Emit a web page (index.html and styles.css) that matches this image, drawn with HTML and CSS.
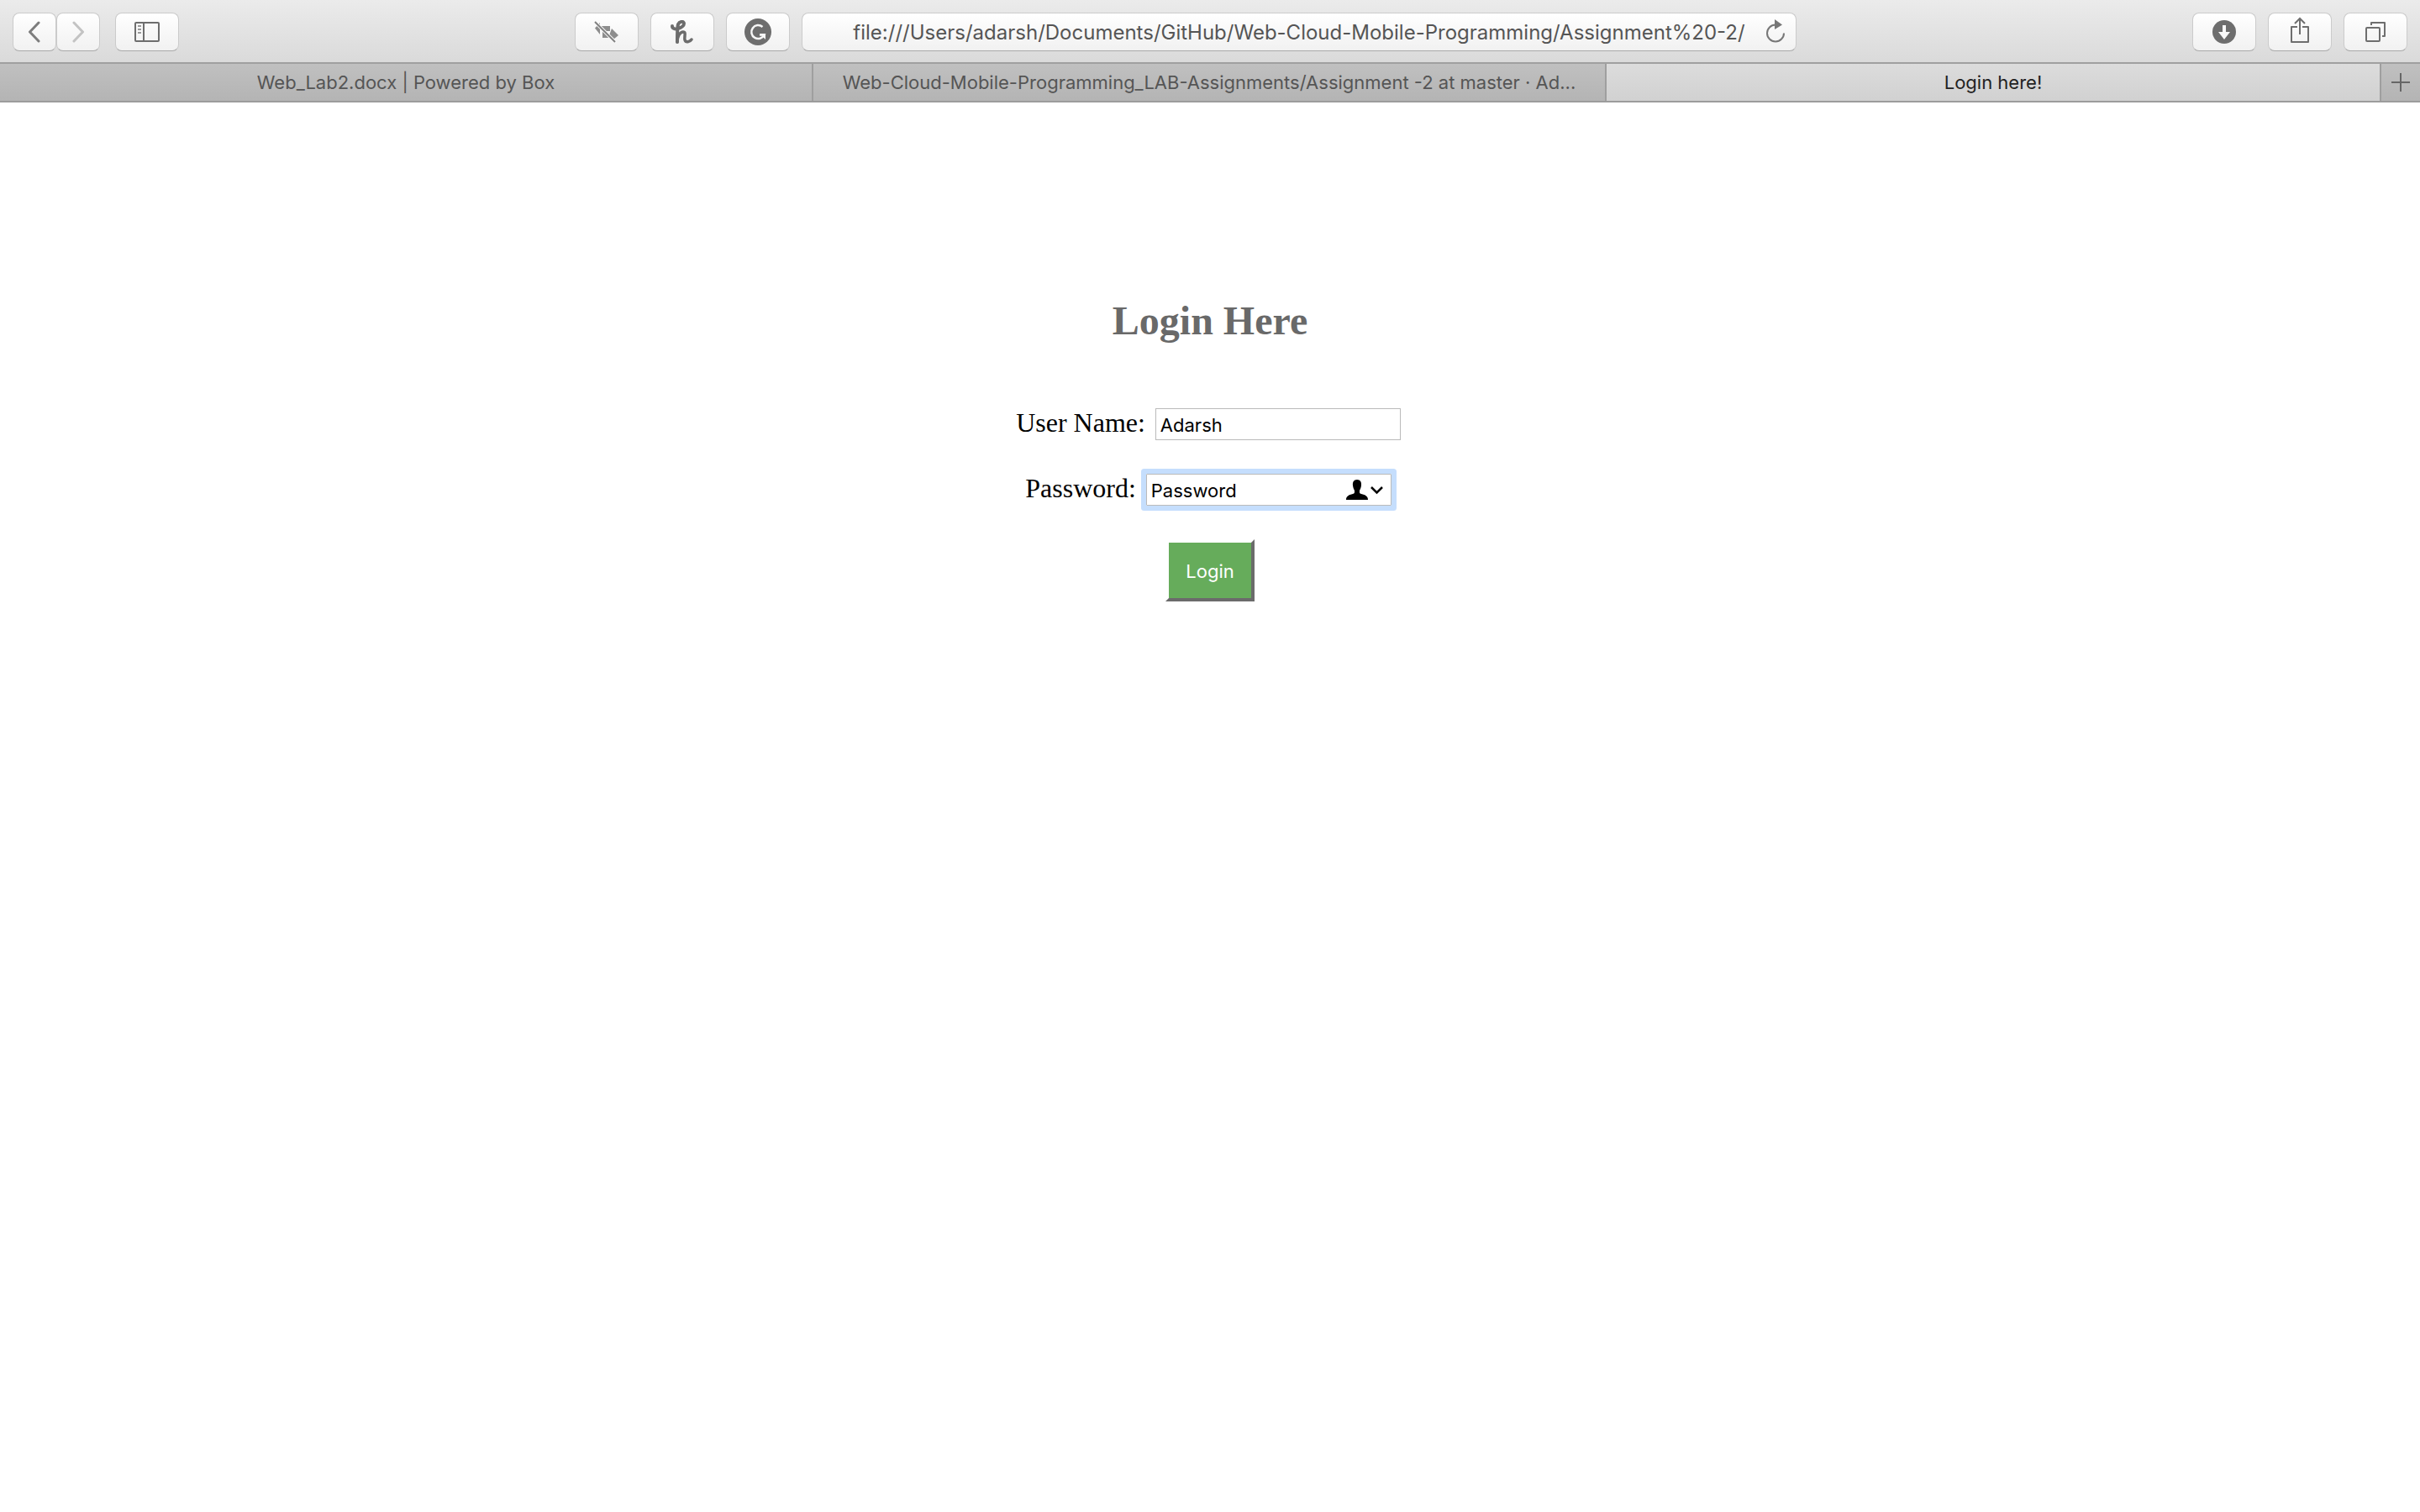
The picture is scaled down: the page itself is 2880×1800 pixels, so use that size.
FILE: index.html
```html
<!DOCTYPE html>
<html lang="en">
<head>
<meta charset="utf-8">
<title>Login here!</title>
<link rel="stylesheet" href="styles.css">
</head>
<body>
<header class="chrome">
  <div class="toolbar">
    <div class="group">
      <div class="nav-pair">
        <button class="tool tool-nav" type="button" aria-label="Back"><svg width="16" height="26" viewBox="0 0 16 26"><path d="M13 2 2.500 13 13 24" fill="none" stroke="#7d7d7d" stroke-width="3" stroke-linecap="round" stroke-linejoin="round"/></svg></button>
        <button class="tool tool-nav" type="button" aria-label="Forward" disabled><svg width="16" height="26" viewBox="0 0 16 26"><path d="M3 2 13.500 13 3 24" fill="none" stroke="#c3c3c3" stroke-width="3" stroke-linecap="round" stroke-linejoin="round"/></svg></button>
      </div>
      <button class="tool" type="button" aria-label="Show sidebar"><svg width="30" height="24" viewBox="0 0 30 24" fill="none" stroke="#6e6e6e" stroke-width="2"><rect x="1" y="1" width="28" height="22" rx="1"/><path d="M11 1v22"/><path d="M4 5h4M4 9h4M4 13h4" stroke="#999"/></svg></button>
    </div>
    <div class="group group-center">
      <button class="tool" type="button" aria-label="Content blocker"><svg width="30" height="26" viewBox="0 0 30 26"><g fill="#8d8d8d"><path d="M1 8.500 7 2v14z"/><path d="M7 6h12v6H12z"/><path d="M10 12v8h10z"/><path d="M21 9l8 8-6 5-5-5z"/></g><path d="M1 1 26 26" stroke="#f8f8f8" stroke-width="4"/><path d="M1 1 25 25" stroke="#808080" stroke-width="2"/></svg></button>
      <button class="tool" type="button" aria-label="Honey"><svg width="28" height="28" viewBox="0 0 28 28" fill="none" stroke="#6c6c6c" stroke-width="4" stroke-linecap="round" stroke-linejoin="round"><path d="M2 7c0 3 3 4 7 3 4-1 7-3.500 7-6 0-3-5-3-7 1-1 3-1 9-1 21"/><path d="M8 26c0-6 3-12 7-12 4 0 1 6 2 9.500 1 3.500 6 2.500 8-.5" stroke-width="3.500"/></svg></button>
      <button class="tool" type="button" aria-label="Grammarly"><svg width="32" height="32" viewBox="0 0 32 32"><circle cx="16" cy="16" r="16" fill="#6e6e6e"/><path d="M21.500 10A8 8 0 1 0 23.500 19.500H18" fill="none" stroke="#f7f7f7" stroke-width="2.500"/><path d="M18 18h7v7l-3-3z" fill="#f7f7f7"/></svg></button>
      <div class="address">
        <input class="address-input" type="text" aria-label="Address" value="file:///Users/adarsh/Documents/GitHub/Web-Cloud-Mobile-Programming/Assignment%20-2/">
        <button class="reload" type="button" aria-label="Reload"><svg width="24" height="28" viewBox="0 0 24 28"><path d="M12 6.500A10 10 0 1 0 22 16.500" fill="none" stroke="#777" stroke-width="2"/><path d="M11 0 20 6.500 11 12z" fill="#777"/></svg></button>
      </div>
    </div>
    <div class="group">
      <button class="tool" type="button" aria-label="Downloads"><svg width="28" height="28" viewBox="0 0 28 28"><circle cx="14" cy="14" r="14" fill="#6e6e6e"/><path d="M12 6h4v8h5l-7 9-7-9h5z" fill="#fafafa"/></svg></button>
      <button class="tool" type="button" aria-label="Share"><svg class="share" width="24" height="32" viewBox="0 0 24 32" fill="none" stroke="#6e6e6e" stroke-width="2"><path d="M9 12H2v18h20V12h-7" stroke-linejoin="round"/><path d="M12 21V2M6 8l6-6 6 6"/></svg></button>
      <button class="tool" type="button" aria-label="Show all tabs"><svg width="26" height="26" viewBox="0 0 26 26" fill="none" stroke="#6e6e6e" stroke-width="2"><rect x="2" y="8" width="16" height="16" rx="1"/><path d="M8 5V2h16v16h-3" stroke-linejoin="round"/></svg></button>
    </div>
  </div>
  <nav class="tabs" aria-label="Tabs">
    <a class="tab tab-wide" href="#box">Web_Lab2.docx | Powered by Box</a>
    <a class="tab tab-mid" href="#github">Web-Cloud-Mobile-Programming_LAB-Assignments/Assignment -2 at master · Ad...</a>
    <a class="tab tab-active" href="#login" aria-current="page">Login here!</a>
    <button class="tab-add" type="button" aria-label="New tab"><svg width="22" height="22" viewBox="0 0 22 22"><path d="M11 0v22M0 11h22" stroke="#666" stroke-width="2"/></svg></button>
  </nav>
</header>
<main class="page">
  <h1 class="title">Login Here</h1>
  <form class="form">
    <div class="row">
      <label for="user">User Name:</label>
      <div class="field"><input class="field-input" id="user" type="text" value="Adarsh"></div>
    </div>
    <div class="row">
      <label for="pass">Password:</label>
      <div class="field field-focus">
        <input class="field-input" id="pass" type="text" value="Password">
        <button class="autofill" type="button" aria-label="Fill in saved account"><svg width="44" height="24" viewBox="0 0 44 24"><path d="M13 0c4 0 5.500 3 5 7-.3 3-1.500 5-2 6 0 3 0 3.500 2 4 5 1 8 3 8 7H0c0-4 3-6 8-7 2-.5 2-1 2-4-.5-1-1.700-3-2-6-.5-4 1-7 5-7z"/><path d="M30 9l6.500 6.500L43 9" fill="none" stroke="#000" stroke-width="2.500"/></svg></button>
      </div>
    </div>
    <button class="submit" type="button">Login</button>
  </form>
</main>
</body>
</html>
```
FILE: styles.css
```css
* { box-sizing: border-box; }

body {
  margin: 0;
  background: #fff;
  color: #000;
  font-family: "Liberation Serif", "Times New Roman", serif;
}

button, input { font-family: Inter, sans-serif; }
svg { display: block; }

/* Browser toolbar */
.toolbar {
  display: flex;
  justify-content: space-between;
  height: 74px;
  padding: 15px;
  background: linear-gradient(#ebebeb, #dadada);
}
.group { display: flex; gap: 14px; }
.group:first-child { gap: 18px; }
.group-center { width: 51%; }
.nav-pair { display: flex; }

.tool, .address {
  height: 46px;
  border: 1px solid #cbcbcb;
  border-bottom-color: #a9a9a9;
  border-radius: 8px;
  background: linear-gradient(#fff, #f1f1f1);
}
.tool {
  display: flex;
  flex: none;
  align-items: center;
  justify-content: center;
  width: 76px;
  padding: 0;
}
.tool-nav { width: 52px; }

.share { margin-bottom: 4px; }

.address {
  display: flex;
  flex: 1;
  align-items: center;
  padding: 0 12px 0 48px;
}
.address-input {
  flex: 1;
  min-width: 0;
  padding: 2px 0 0;
  border: 0;
  background: none;
  color: #555;
  font-size: 24px;
  line-height: 32px;
  text-align: center;
}
.reload {
  flex: none;
  padding: 0 0 2px 12px;
  border: 0;
  background: none;
}

/* Tab strip */
.tabs {
  display: flex;
  height: 48px;
  border-top: 2px solid #a0a0a0;
  border-bottom: 2px solid #9c9c9c;
  background: linear-gradient(#c0c0c0, #b4b4b4);
}
.tab {
  min-width: 0;
  overflow: hidden;
  border-right: 2px solid #9f9f9f;
  color: #555;
  font: 22px/44px Inter, sans-serif;
  text-align: center;
  text-decoration: none;
  text-overflow: ellipsis;
  white-space: nowrap;
}
.tab-wide { flex: 968; }
.tab-mid { flex: 944; }
.tab-active {
  flex: 922;
  background: linear-gradient(#dcdcdc, #d1d1d1);
  color: #222;
}
.tab-add {
  display: flex;
  align-items: center;
  justify-content: center;
  width: 46px;
  padding: 0;
  border: 0;
  background: none;
}

/* Login page */
.page { padding-top: 232px; }
.title {
  margin: 0 0 76px;
  color: #696969;
  font-size: 48px;
  line-height: 56px;
  text-align: center;
}
.form {
  display: flex;
  flex-direction: column;
  align-items: center;
  gap: 40px;
}
.row {
  display: flex;
  align-items: baseline;
  gap: 12px;
  padding-right: 4px;
  font-size: 32px;
  line-height: 32px;
}
.field {
  display: flex;
  align-items: center;
  width: 292px;
  height: 38px;
  padding: 0 9px 0 5px;
  border: 1px solid #bababa;
}
.field-focus { box-shadow: 0 0 0 6px #c5defd; border-radius: 1px; }
.field-input {
  flex: 1;
  min-width: 0;
  height: 36px;
  padding: 2px 0 0;
  border: 0;
  outline: 0;
  background: none;
  font-size: 22px;
}
.autofill {
  flex: none;
  padding: 0;
  border: 0;
  background: none;
}
.submit {
  padding: 21px 20px 19px;
  border: 4px solid;
  border-color: #fff #6b6b6b #6b6b6b #fff;
  background: #66ac5b;
  color: #fff;
  font-size: 22px;
  line-height: 26px;
}
```
